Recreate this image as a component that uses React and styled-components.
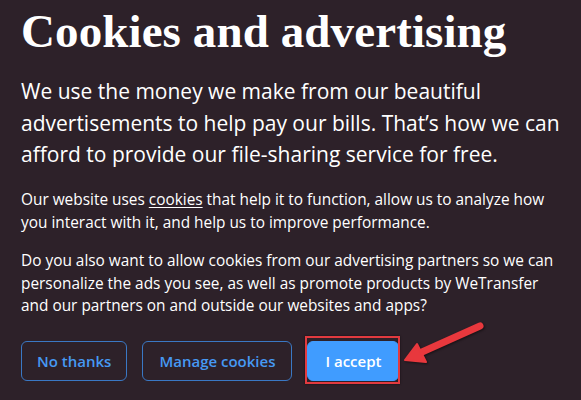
import React from "react";
import styled, { createGlobalStyle } from "styled-components";

const GlobalStyle = createGlobalStyle`
  html, body {
    margin: 0;
    padding: 0;
    background: #2d2129;
  }
`;

const Panel = styled.div`
  position: relative;
  box-sizing: border-box;
  width: 581px;
  height: 400px;
  overflow: hidden;
  padding: 4px 8px 0 21px;
  background: #2d2129;
  color: #ffffff;
  font-family: "Open Sans", "Liberation Sans", sans-serif;
`;

const Heading = styled.h1`
  margin: 0;
  font-family: "Liberation Serif", "Times New Roman", serif;
  font-weight: 700;
  font-size: 47px;
  line-height: 54px;
  letter-spacing: 0.1px;
`;

const Lead = styled.p`
  margin: 18px 0 0;
  font-size: 21px;
  line-height: 31.5px;
  font-weight: 400;
`;

const Body = styled.p`
  margin: ${(p) => p.$gap || "16px"} 0 0;
  font-size: 15.4px;
  line-height: 22.5px;
`;

const Link = styled.a`
  color: inherit;
  text-decoration: underline;
  text-underline-offset: 2px;
`;

const Actions = styled.div`
  display: flex;
  gap: 15px;
  margin-top: 23px;
`;

const Button = styled.button`
  position: relative;
  box-sizing: border-box;
  height: 40px;
  padding: 0 ${(p) => p.$pad || "16px"};
  border-radius: 6px;
  border: 1px solid ${(p) => (p.$primary ? "#409cff" : "#3a78c4")};
  background: ${(p) => (p.$primary ? "#409cff" : "transparent")};
  color: ${(p) => (p.$primary ? "#ffffff" : "#4699f3")};
  font-family: "Open Sans", "Liberation Sans", sans-serif;
  font-weight: 600;
  font-size: 15px;
  cursor: pointer;
`;

const Highlight = styled.span`
  position: absolute;
  top: -6px;
  left: -3px;
  right: -2px;
  bottom: -4px;
  border: 2px solid #e23a3f;
  box-shadow: 0 0 2px rgba(0, 0, 0, 0.6);
  pointer-events: none;
`;

const Arrow = styled.svg`
  position: absolute;
  left: 395px;
  top: 318px;
  width: 95px;
  height: 50px;
  filter: drop-shadow(1px 1px 1px rgba(0, 0, 0, 0.5));
`;

export default function App() {
  return (
    <>
      <GlobalStyle />
      <Panel>
        <Heading>Cookies and advertising</Heading>
        <Lead>
          We use the money we make from our beautiful advertisements to help
          pay our bills. That’s how we can afford to provide our file-sharing
          service for free.
        </Lead>
        <Body $gap="18.5px">
          Our website uses <Link href="#">cookies</Link> that help it to
          function, allow us to analyze how<br />
          you interact with it, and help us to improve performance.
        </Body>
        <Body>
          Do you also want to allow cookies from our advertising partners so we
          can personalize the ads you see, as well as promote products by
          WeTransfer<br />
          and our partners on and outside our websites and apps?
        </Body>
        <Actions>
          <Button $pad="15px">No thanks</Button>
          <Button $pad="16px">Manage cookies</Button>
          <Button $primary $pad="17px">
            I accept
            <Highlight />
          </Button>
        </Actions>
        <Arrow viewBox="395 318 95 50">
          <line x1="480" y1="326" x2="422" y2="352" stroke="#e8383d" strokeWidth="7" strokeLinecap="round" />
          <polygon points="405,360 417,344 426,362" fill="#e8383d" stroke="#e8383d" strokeWidth="2" strokeLinejoin="round" />
        </Arrow>
      </Panel>
    </>
  );
}
